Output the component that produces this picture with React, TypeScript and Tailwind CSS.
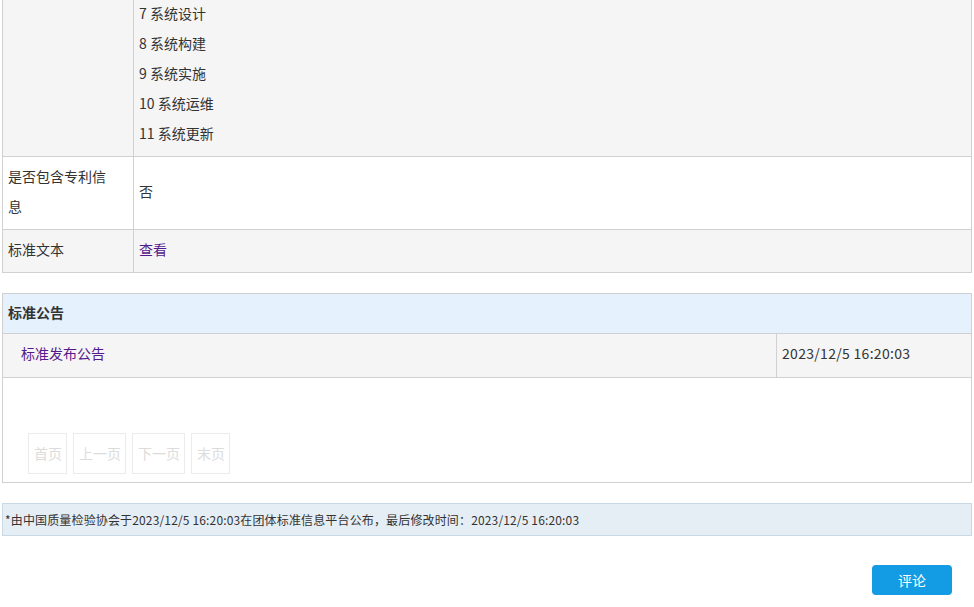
import React from "react";

const font = { fontFamily: '"Noto Sans CJK SC", "Microsoft YaHei", sans-serif' };

export default function App() {
  const items = ["7 系统设计", "8 系统构建", "9 系统实施", "10 系统运维", "11 系统更新"];
  return (
    <div className="w-[974px] h-[607px] bg-white text-[#333] text-[14px] overflow-hidden" style={font}>
      {/* top table */}
      <div className="mx-[2px] mt-[-2px] border-l border-r border-[#d0d0d0]">
        <div className="flex bg-[#f5f5f5] border-b border-[#d0d0d0]">
          <div className="w-[131px] shrink-0 border-r border-[#d0d0d0]" />
          <div className="flex-1 px-[5px] pb-[8px]">
            {items.map((t) => (
              <div key={t} className="leading-[30px]">{t}</div>
            ))}
          </div>
        </div>
        <div className="flex bg-white border-b border-[#d0d0d0]">
          <div className="w-[131px] shrink-0 border-r border-[#d0d0d0] pl-[5px] pr-[20px] pt-[4px] pb-[8px] leading-[30px]">
            是否包含专利信息
          </div>
          <div className="flex-1 px-[5px] pb-[4px] flex items-center leading-[30px]">否</div>
        </div>
        <div className="flex bg-[#f5f5f5] border-b border-[#d0d0d0]">
          <div className="w-[131px] shrink-0 border-r border-[#d0d0d0] pl-[5px] pr-[20px] pt-[4px] pb-[8px] leading-[30px]">
            标准文本
          </div>
          <div className="flex-1 px-[5px] pt-[4px] pb-[8px] leading-[30px] text-[#551a8b]">查看</div>
        </div>
      </div>

      {/* announcements */}
      <div className="mx-[2px] mt-[20px] border border-[#d0d0d0]">
        <div className="bg-[#e5f1fd] border-b border-[#d0d0d0] px-[5px] pt-[3px] pb-[5px] leading-[31px] font-bold">
          标准公告
        </div>
        <div className="flex bg-[#f5f5f5] border-b border-[#d0d0d0]">
          <div className="flex-1 pl-[18px] pt-[4px] pb-[8px] leading-[31px] text-[#551a8b]">标准发布公告</div>
          <div className="w-[195px] shrink-0 border-l border-[#d0d0d0] px-[5px] pt-[4px] pb-[8px] leading-[31px] tracking-[0.3px]">
            2023/12/5 16:20:03
          </div>
        </div>
        <div className="pt-[55px] pb-[8px] pl-[25px] flex gap-[6px]">
          {["首页", "上一页", "下一页", "末页"].map((t) => (
            <div
              key={t}
              className="border border-[#ebebeb] pl-[5px] pr-[4px] h-[41px] leading-[38px] text-[#dcdcdc]"
            >
              {t}
            </div>
          ))}
        </div>
      </div>

      {/* footer note */}
      <div className="mx-[2px] mt-[20px] bg-[#e6eef5] border border-[#c8d8e4] px-[2px] leading-[31px] text-[12px] tracking-[0.15px] text-[#333]">
        *由中国质量检验协会于2023/12/5 16:20:03在团体标准信息平台公布，最后修改时间：2023/12/5 16:20:03
      </div>

      {/* comment button */}
      <div className="flex justify-end pr-[22px] mt-[29px]">
        <button className="w-[80px] h-[30px] rounded-[4px] bg-[#139ce4] text-white text-[14px] leading-[30px]" style={font}>
          评论
        </button>
      </div>
    </div>
  );
}
